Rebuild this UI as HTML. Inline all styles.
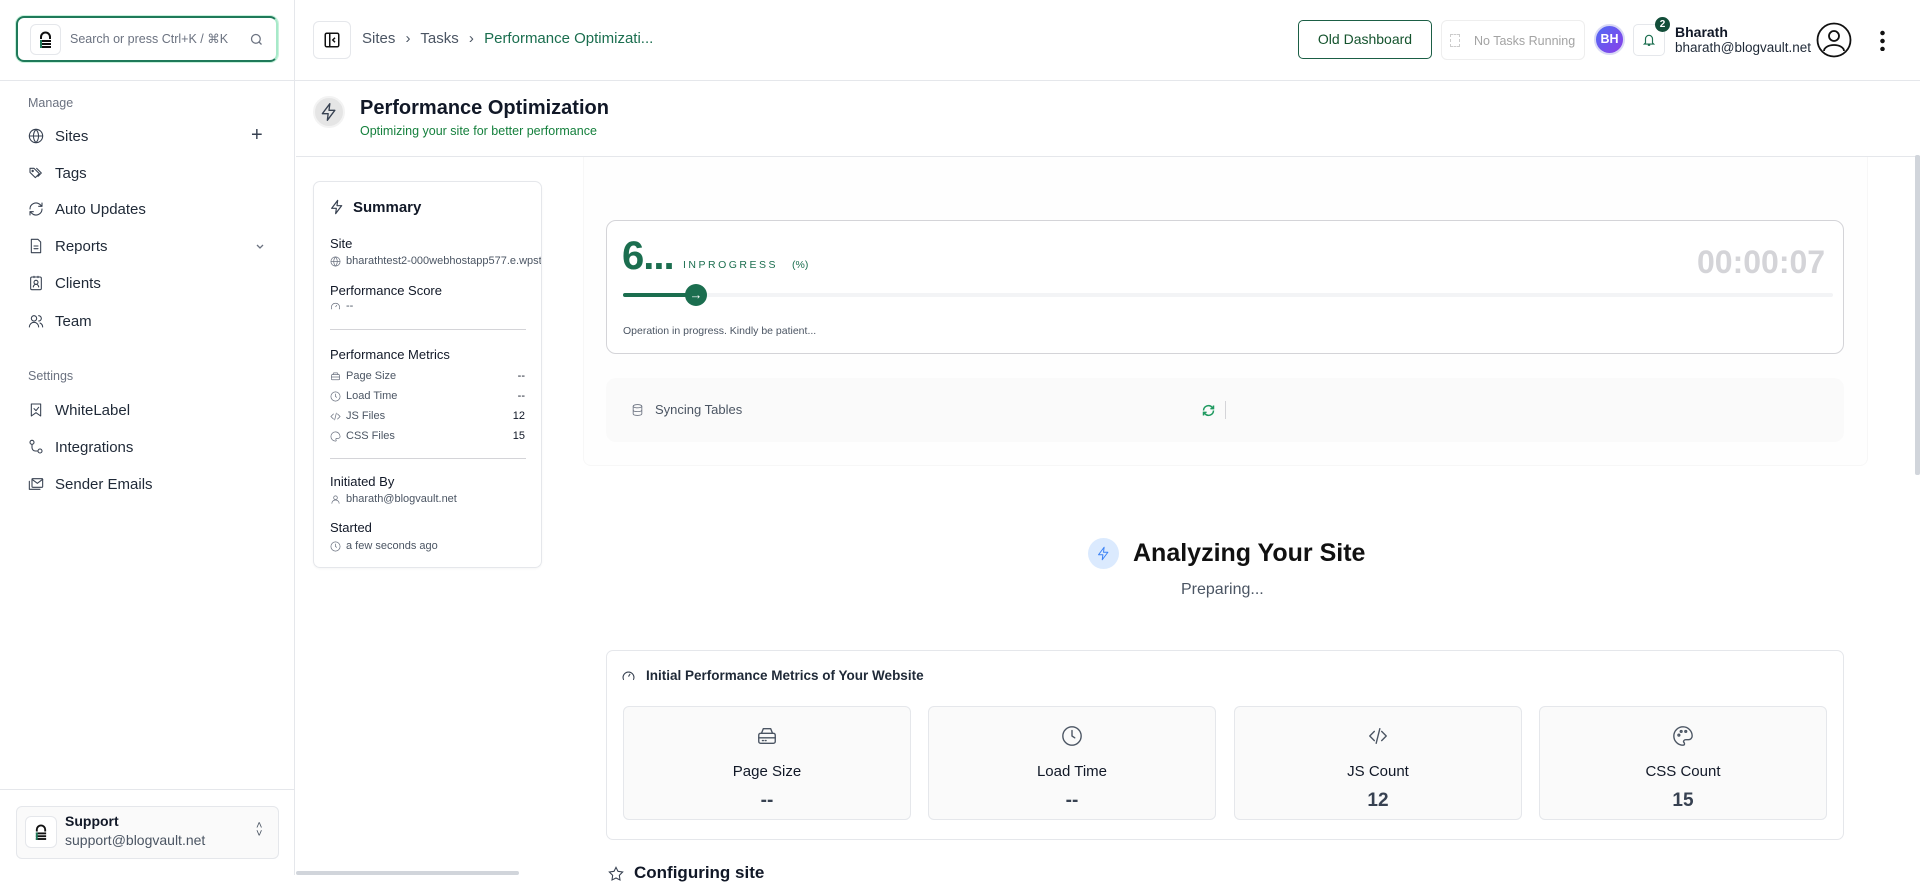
<!DOCTYPE html>
<html><head><meta charset="utf-8"><style>
*{box-sizing:border-box;margin:0;padding:0}
body{width:1920px;height:875px;overflow:hidden;background:#fff;font-family:"Liberation Sans",sans-serif;color:#111827;position:relative}
.a{position:absolute}
svg{display:block}
.side{left:0;top:0;width:295px;height:875px;border-right:1px solid #e5e7eb}
.nav{left:28px;font-size:15px;color:#1f2937;display:flex;align-items:center;gap:11px;height:20px}
.lbl{left:28px;font-size:12.5px;color:#6b7280}
.ic{width:16px;height:16px;fill:none;stroke:#374151;stroke-width:1.6;stroke-linecap:round;stroke-linejoin:round}
.sm{font-size:11px;color:#4b5563;display:flex;align-items:center;gap:5px}
.sm svg{width:11px;height:11px;fill:none;stroke:#6b7280;stroke-width:1.6}
.h{font-size:13px;color:#111827}
.tile{top:706px;width:288px;height:114px;background:#fafafa;border:1px solid #e5e7eb;border-radius:6px;text-align:center}
.tile svg{margin:18px auto 0;width:22px;height:22px;fill:none;stroke:#4b5563;stroke-width:1.5;stroke-linecap:round;stroke-linejoin:round}
.tile .t{font-size:15px;margin-top:16px;color:#111827}
.tile .v{font-size:19px;font-weight:bold;margin-top:10px;color:#374151}
</style></head><body>
<div class="a side"></div>
<div class="a" style="left:16px;top:16px;width:262px;height:46px;border:2px solid #1f7a5a;border-right-color:#a7e9c9;border-radius:8px;box-shadow:0 0 0 1px #c9f2dc"></div>
<div class="a" style="left:30px;top:24px;width:31px;height:31px;border:1px solid #e5e7eb;border-radius:6px"></div>
<svg class="a" style="left:38px;top:31px" width="15" height="17" viewBox="0 0 15 17"><path d="M3 8V6a4.5 4.5 0 0 1 9 0v2" fill="none" stroke="#111" stroke-width="2"/><rect x="2" y="9" width="11" height="2" fill="#111"/><rect x="2" y="12" width="11" height="2" fill="#111"/><rect x="2" y="15" width="11" height="2" fill="#111"/><rect x="2" y="9" width="2" height="8" fill="#1f7a5a"/></svg>
<div class="a" style="left:70px;top:31px;font-size:12.5px;color:#6b7280">Search or press Ctrl+K / ⌘K</div>
<svg class="a" style="left:249px;top:32px" width="15" height="15" viewBox="0 0 24 24" fill="none" stroke="#6b7280" stroke-width="2"><circle cx="11" cy="11" r="7"/><path d="M20 20l-4-4"/></svg>
<div class="a" style="left:0;top:80px;width:1920px;height:1px;background:#e5e7eb"></div>

<div class="a lbl" style="top:96px">Manage</div>
<div class="a nav" style="top:126px"><svg class="ic" viewBox="0 0 24 24"><circle cx="12" cy="12" r="10"/><path d="M2 12h20M12 2a15 15 0 0 1 0 20M12 2a15 15 0 0 0 0 20"/></svg>Sites</div>
<div class="a" style="left:251px;top:124px;font-size:20px;color:#374151">+</div>
<div class="a nav" style="top:163px"><svg class="ic" viewBox="0 0 24 24"><path d="M3 5v6l8 8 6-6-8-8zM13 5l7 7-5 5"/><circle cx="7" cy="9" r="1"/></svg>Tags</div>
<div class="a nav" style="top:199px"><svg class="ic" viewBox="0 0 24 24"><path d="M3 12a9 9 0 0 1 15-6.7L21 8M21 3v5h-5M21 12a9 9 0 0 1-15 6.7L3 16M3 21v-5h5"/></svg>Auto Updates</div>
<div class="a nav" style="top:236px"><svg class="ic" viewBox="0 0 24 24"><path d="M6 2h9l4 4v16H5V2zM9 12h6M9 16h6"/></svg>Reports</div>
<svg class="a" style="left:255px;top:243px" width="10" height="8" viewBox="0 0 10 8" fill="none" stroke="#6b7280" stroke-width="1.3"><path d="M2 2l3 3 3-3"/></svg>
<div class="a nav" style="top:273px"><svg class="ic" viewBox="0 0 24 24"><rect x="4" y="3" width="16" height="19" rx="2"/><circle cx="12" cy="11" r="3"/><path d="M8 18a4 4 0 0 1 8 0M9 2v2M15 2v2"/></svg>Clients</div>
<div class="a nav" style="top:311px"><svg class="ic" viewBox="0 0 24 24"><circle cx="9" cy="8" r="4"/><path d="M2 21a7 7 0 0 1 14 0M16 4a4 4 0 0 1 0 8M22 21a7 7 0 0 0-4-6"/></svg>Team</div>
<div class="a lbl" style="top:369px">Settings</div>
<div class="a nav" style="top:400px"><svg class="ic" viewBox="0 0 24 24"><path d="M5 3h14v18l-7-5-7 5zM9 10l3 3 4-5"/></svg>WhiteLabel</div>
<div class="a nav" style="top:437px"><svg class="ic" viewBox="0 0 24 24"><circle cx="6" cy="5" r="3"/><circle cx="18" cy="18" r="3"/><path d="M6 8v5a5 5 0 0 0 5 5h4"/></svg>Integrations</div>
<div class="a nav" style="top:474px"><svg class="ic" viewBox="0 0 24 24"><rect x="6" y="4" width="16" height="13" rx="1"/><path d="M6 5l8 6 8-6M2 8v12h16"/></svg>Sender Emails</div>
<div class="a" style="left:0;top:789px;width:295px;height:1px;background:#e5e7eb"></div>
<div class="a" style="left:16px;top:806px;width:263px;height:53px;border:1px solid #e5e7eb;border-radius:6px;background:#fafafa"></div>
<div class="a" style="left:25px;top:816px;width:32px;height:32px;border:1px solid #e5e7eb;border-radius:6px;background:#fff"></div>
<svg class="a" style="left:34px;top:824px" width="14" height="16" viewBox="0 0 15 17"><path d="M3 8V6a4.5 4.5 0 0 1 9 0v2" fill="none" stroke="#111" stroke-width="2"/><rect x="2" y="9" width="11" height="2" fill="#111"/><rect x="2" y="12" width="11" height="2" fill="#111"/><rect x="2" y="15" width="11" height="2" fill="#111"/><rect x="2" y="9" width="2" height="8" fill="#1f7a5a"/></svg>
<div class="a" style="left:65px;top:813px;font-size:14px;font-weight:bold">Support</div>
<div class="a" style="left:65px;top:832px;font-size:14px;color:#4b5563">support@blogvault.net</div>
<div class="a" style="left:256px;top:822px;font-size:11px;color:#4b5563;line-height:8px">˄<br>˅</div>
<div class="a" style="left:296px;top:871px;width:223px;height:4px;background:#d1d5db;border-radius:2px"></div>

<!-- header -->
<div class="a" style="left:313px;top:21px;width:38px;height:38px;border:1px solid #e5e7eb;border-radius:6px"></div>
<svg class="a" style="left:323px;top:31px" width="18" height="18" viewBox="0 0 24 24" fill="none" stroke="#111" stroke-width="2"><rect x="3" y="3" width="18" height="18" rx="2"/><path d="M9 3v18M16 9l-3 3 3 3"/></svg>
<div class="a" style="left:362px;top:30px;font-size:15px;color:#4b5563">Sites <span style="margin:0 6px">›</span> Tasks <span style="margin:0 6px">›</span> <span style="color:#1b6e4f">Performance Optimizati...</span></div>
<div class="a" style="left:1298px;top:20px;width:134px;height:39px;border:1px solid #1b5e45;border-radius:5px;font-size:14px;color:#14532d;text-align:center;line-height:37px">Old Dashboard</div>
<div class="a" style="left:1441px;top:20px;width:144px;height:40px;border:1px solid #eee;border-radius:6px;font-size:12.5px;color:#a3a3a3;line-height:40px;padding-left:32px">No Tasks Running</div>
<div class="a" style="left:1450px;top:34px;width:10px;height:13px;border:1px dashed #ccc"></div>
<div class="a" style="left:1594px;top:24px;width:31px;height:31px;border-radius:50%;background:linear-gradient(135deg,#4f6bf5,#8b3ee8);border:2px solid #d9d9f5;color:#fff;font-size:12.5px;font-weight:bold;text-align:center;line-height:27px">BH</div>
<div class="a" style="left:1633px;top:24px;width:32px;height:32px;border:1px solid #e5e7eb;border-radius:5px"></div>
<svg class="a" style="left:1642px;top:32px" width="14" height="16" viewBox="0 0 24 24" fill="none" stroke="#1b6e4f" stroke-width="2"><path d="M6 17V10a6 6 0 0 1 12 0v7l2 2H4zM10 21h4"/></svg>
<div class="a" style="left:1655px;top:17px;width:15px;height:15px;border-radius:50%;background:#134e3a;color:#fff;font-size:10px;font-weight:bold;text-align:center;line-height:15px">2</div>
<div class="a" style="left:1675px;top:24px;font-size:14px;font-weight:bold">Bharath</div>
<div class="a" style="left:1675px;top:40px;font-size:13.5px;color:#1f2937">bharath@blogvault.net</div>
<svg class="a" style="left:1816px;top:22px" width="36" height="36" viewBox="0 0 36 36" fill="none" stroke="#111" stroke-width="1.8"><circle cx="18" cy="18" r="16.5"/><circle cx="18" cy="14" r="5"/><path d="M8 29a10 6 0 0 1 20 0"/></svg>
<div class="a" style="left:1880px;top:29px;width:5px;height:22px;background:radial-gradient(circle,#111 2px,transparent 2.5px) 0 0/5px 8px"></div>

<!-- page title -->
<div class="a" style="left:313px;top:96px;width:32px;height:32px;border-radius:50%;background:#e5e5e5;border:2px solid #f3f3f3"></div>
<svg class="a" style="left:319px;top:102px" width="20" height="20" viewBox="0 0 24 24" fill="none" stroke="#374151" stroke-width="1.6" stroke-linejoin="round"><path d="M13 2L4 14h7l-1 8 9-12h-7z"/></svg>
<div class="a" style="left:360px;top:97px;font-size:20px;font-weight:bold">Performance Optimization</div>
<div class="a" style="left:360px;top:124px;font-size:12.5px;color:#15803d">Optimizing your site for better performance</div>
<div class="a" style="left:296px;top:156px;width:1624px;height:1px;background:#e5e7eb"></div>
<div class="a" style="left:1915px;top:155px;width:5px;height:320px;background:#d1d5db;border-radius:2px"></div>

<!-- summary -->
<div class="a" style="left:313px;top:181px;width:229px;height:387px;border:1px solid #e5e7eb;border-radius:7px;box-shadow:0 1px 2px rgba(0,0,0,.04);overflow:hidden">
<svg class="a" style="left:15px;top:17px" width="16" height="16" viewBox="0 0 24 24" fill="none" stroke="#374151" stroke-width="1.8" stroke-linejoin="round"><path d="M13 2L4 14h7l-1 8 9-12h-7z"/></svg>
<div class="a" style="left:39px;top:17px;font-size:15px;font-weight:bold">Summary</div>
<div class="a h" style="left:16px;top:54px">Site</div>
<div class="a sm" style="left:16px;top:73px;white-space:nowrap"><svg viewBox="0 0 24 24"><circle cx="12" cy="12" r="10"/><path d="M2 12h20M12 2a15 15 0 0 1 0 20M12 2a15 15 0 0 0 0 20"/></svg>bharathtest2-000webhostapp577.e.wpstage.net</div>
<div class="a h" style="left:16px;top:101px">Performance Score</div>
<div class="a sm" style="left:16px;top:118px"><svg viewBox="0 0 24 24"><path d="M4 18a9 9 0 1 1 16 0M12 13l3-4"/></svg>--</div>
<div class="a" style="left:16px;top:147px;width:196px;height:1px;background:#d4d4d8"></div>
<div class="a h" style="left:16px;top:165px">Performance Metrics</div>
<div class="a sm" style="left:16px;top:188px"><svg viewBox="0 0 24 24"><rect x="3" y="8" width="18" height="11" rx="2"/><path d="M3 13h18M6 8l2-4h8l2 4"/></svg>Page Size</div><div class="a" style="right:16px;top:188px;font-size:11px">--</div>
<div class="a sm" style="left:16px;top:208px"><svg viewBox="0 0 24 24"><circle cx="12" cy="12" r="10"/><path d="M12 6v6l3 2"/></svg>Load Time</div><div class="a" style="right:16px;top:208px;font-size:11px">--</div>
<div class="a sm" style="left:16px;top:228px"><svg viewBox="0 0 24 24"><path d="M8 6l-6 6 6 6M16 6l6 6-6 6M14 4l-4 16"/></svg>JS Files</div><div class="a" style="right:16px;top:228px;font-size:11px">12</div>
<div class="a sm" style="left:16px;top:248px"><svg viewBox="0 0 24 24"><path d="M12 2a10 10 0 0 0 0 20c2 0 2-2 1-3s0-3 2-3h3a4 4 0 0 0 4-4c0-5-4-10-10-10z"/></svg>CSS Files</div><div class="a" style="right:16px;top:248px;font-size:11px">15</div>
<div class="a" style="left:16px;top:276px;width:196px;height:1px;background:#d4d4d8"></div>
<div class="a h" style="left:16px;top:292px">Initiated By</div>
<div class="a sm" style="left:16px;top:311px"><svg viewBox="0 0 24 24"><circle cx="12" cy="8" r="4"/><path d="M4 21a8 8 0 0 1 16 0"/></svg>bharath@blogvault.net</div>
<div class="a h" style="left:16px;top:338px">Started</div>
<div class="a sm" style="left:16px;top:358px"><svg viewBox="0 0 24 24"><circle cx="12" cy="12" r="10"/><path d="M12 6v6l3 2"/></svg>a few seconds ago</div>
</div>

<!-- outer progress container -->
<div class="a" style="left:583px;top:157px;width:1285px;height:309px;border:1px solid #f7f7f7;border-top:none;border-radius:0 0 8px 8px;background:#fefefe"></div>
<div class="a" style="left:606px;top:220px;width:1238px;height:134px;border:1px solid #d4d4d8;border-radius:10px;background:#fff"></div>
<div class="a" style="left:622px;top:234px;font-size:40px;font-weight:bold;color:#1b6e4f;letter-spacing:-1px">6...</div>
<div class="a" style="left:683px;top:259px;font-size:10.5px;color:#1b6e4f;letter-spacing:2.5px">INPROGRESS<span style="margin-left:14px;letter-spacing:0">(%)</span></div>
<div class="a" style="left:1697px;top:244px;font-size:32px;font-weight:bold;color:#d4d4d8">00:00:07</div>
<div class="a" style="left:623px;top:293px;width:1210px;height:4px;background:#f3f4f6;border-radius:2px"></div>
<div class="a" style="left:623px;top:293px;width:70px;height:4px;background:#1b6e4f;border-radius:2px"></div>
<div class="a" style="left:685px;top:284px;width:22px;height:22px;border-radius:50%;background:#1b6e4f;color:#fff;font-size:13px;text-align:center;line-height:21px">→</div>
<div class="a" style="left:623px;top:325px;font-size:10.5px;color:#4b5563">Operation in progress. Kindly be patient...</div>
<div class="a" style="left:606px;top:378px;width:1238px;height:64px;border-radius:10px;background:#fafafa"></div>
<svg class="a" style="left:631px;top:403px" width="13" height="14" viewBox="0 0 24 24" fill="none" stroke="#6b7280" stroke-width="1.6"><ellipse cx="12" cy="5" rx="8" ry="3"/><path d="M4 5v14c0 2 4 3 8 3s8-1 8-3V5M4 12c0 2 4 3 8 3s8-1 8-3"/></svg>
<div class="a" style="left:655px;top:402px;font-size:13px;color:#4b5563">Syncing Tables</div>
<svg class="a" style="left:1201px;top:403px" width="15" height="15" viewBox="0 0 24 24" fill="none" stroke="#1f9a60" stroke-width="2.4"><path d="M4 12a8 8 0 0 1 14-5l2 2M20 4v5h-5M20 12a8 8 0 0 1-14 5l-2-2M4 20v-5h5"/></svg>
<div class="a" style="left:1225px;top:401px;width:1px;height:18px;background:#d4d4d8"></div>

<!-- analyzing -->
<div class="a" style="left:1088px;top:538px;width:31px;height:31px;border-radius:50%;background:#dbeafe"></div>
<svg class="a" style="left:1096px;top:546px" width="15" height="15" viewBox="0 0 24 24" fill="none" stroke="#3b82f6" stroke-width="1.6" stroke-linejoin="round"><path d="M13 2L4 14h7l-1 8 9-12h-7z"/></svg>
<div class="a" style="left:1133px;top:539px;font-size:25px;font-weight:bold;color:#111">Analyzing Your Site</div>
<div class="a" style="left:1181px;top:581px;font-size:16px;color:#4b5563">Preparing...</div>

<div class="a" style="left:606px;top:650px;width:1238px;height:190px;border:1px solid #e5e7eb;border-radius:7px"></div>
<svg class="a" style="left:622px;top:669px" width="13" height="13" viewBox="0 0 24 24" fill="none" stroke="#374151" stroke-width="2"><path d="M3 20a10 10 0 1 1 18 0M12 14l3-5"/></svg>
<div class="a" style="left:646px;top:668px;font-size:13.5px;font-weight:bold;color:#1f2937">Initial Performance Metrics of Your Website</div>
<div class="a tile" style="left:623px"><svg viewBox="0 0 24 24"><rect x="3" y="9" width="18" height="11" rx="2"/><path d="M3 14h18M6 9l2-5h8l2 5M7 17h1M10 17h1"/></svg><div class="t">Page Size</div><div class="v">--</div></div>
<div class="a tile" style="left:928px"><svg viewBox="0 0 24 24"><circle cx="12" cy="12" r="10"/><path d="M12 6v6l3 2"/></svg><div class="t">Load Time</div><div class="v">--</div></div>
<div class="a tile" style="left:1234px"><svg viewBox="0 0 24 24"><path d="M8 7l-5 5 5 5M16 7l5 5-5 5M14 4l-4 16"/></svg><div class="t">JS Count</div><div class="v">12</div></div>
<div class="a tile" style="left:1539px"><svg viewBox="0 0 24 24"><path d="M12 2a10 10 0 0 0 0 20c2 0 2-2 1-3s0-3 2-3h3a4 4 0 0 0 4-4c0-5-4-10-10-10z"/><circle cx="7.5" cy="11" r="1"/><circle cx="10" cy="7" r="1"/><circle cx="15" cy="7" r="1"/></svg><div class="t">CSS Count</div><div class="v">15</div></div>
<svg class="a" style="left:608px;top:866px" width="16" height="16" viewBox="0 0 24 24" fill="none" stroke="#374151" stroke-width="1.6"><path d="M12 2l3 6 7 1-5 5 1 7-6-3-6 3 1-7-5-5 7-1z"/></svg>
<div class="a" style="left:634px;top:863px;font-size:17px;font-weight:bold">Configuring site</div>
</body></html>
